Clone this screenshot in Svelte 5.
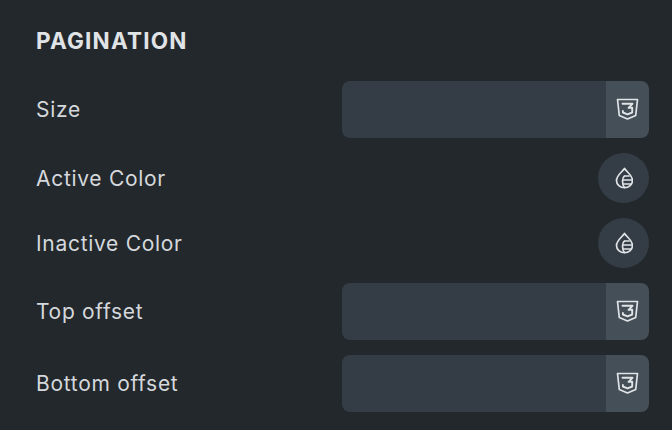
<script lang="ts">
	const rows = [
		{ label: 'Size', kind: 'unit' },
		{ label: 'Active Color', kind: 'color' },
		{ label: 'Inactive Color', kind: 'color' },
		{ label: 'Top offset', kind: 'unit' },
		{ label: 'Bottom offset', kind: 'unit' }
	];
</script>

<div class="panel">
	<h3 class="panel__title">PAGINATION</h3>
	<div class="panel__rows">
		{#each rows as row}
			<div class="row">
				<span class="row__label">{row.label}</span>
				{#if row.kind === 'unit'}
					<div class="field">
						<div class="field__input"></div>
						<div class="field__unit">
							<svg width="23" height="23" viewBox="0 0 23 23" fill="none" stroke="currentColor" stroke-width="1.700" stroke-linejoin="round" stroke-linecap="round">
								<path d="M1.500 1.500h20l-1.800 16L11.500 21l-8.200-3.500z" />
								<path d="M6.500 5.800h10l-4 4h3.700v4.700l-4.700 1.900-4.600-1.900v-1.600" stroke-width="1.900" />
							</svg>
						</div>
					</div>
				{:else}
					<button type="button" class="swatch" aria-label={row.label}>
						<svg width="18" height="22" viewBox="0 0 18 22" fill="none" stroke="currentColor" stroke-width="1.700" stroke-linecap="round" stroke-linejoin="round">
							<path d="M9.500 1.500C7 5 1.500 8.600 1.500 13.400a8 7.300 0 0 0 16 0C17.500 8.600 12 5 9.500 1.500z" />
							<path d="M9.500 9C8 10 7.500 11.500 7.500 14s.5 5 2 6.500M9.500 9h4.500M8 13h9M8.500 17h7.500" />
						</svg>
					</button>
				{/if}
			</div>
		{/each}
	</div>
</div>

<style>
	:global(body) {
		margin: 0;
		background: #23282c;
	}

	.panel {
		height: 430px;
		padding: 0 23px 0 36px;
		box-sizing: border-box;
		background: #23282c;
		font-family: Inter, sans-serif;
		overflow: hidden;
	}

	.panel__title {
		margin: 0;
		padding-top: 28px;
		height: 81px;
		box-sizing: border-box;
		font-size: 22.500px;
		line-height: 26px;
		font-weight: 700;
		letter-spacing: 1.200px;
		color: #e0e4e7;
	}

	.panel__rows {
		display: flex;
		flex-direction: column;
		gap: 14.600px;
	}

	.row {
		display: flex;
		align-items: center;
		justify-content: space-between;
	}

	.row__label {
		font-size: 21px;
		letter-spacing: 0.700px;
		color: #d5d8dc;
	}

	.field {
		display: flex;
		width: 307px;
		height: 57.300px;
		border-radius: 8px;
		overflow: hidden;
	}

	.field__input {
		flex: 1;
		background: #343d45;
	}

	.field__unit {
		display: flex;
		align-items: center;
		justify-content: center;
		width: 43px;
		background: #454f57;
		color: #e0e4e7;
	}

	.swatch {
		display: flex;
		align-items: center;
		justify-content: center;
		width: 51px;
		height: 50.400px;
		padding: 0;
		border: 0;
		border-radius: 50%;
		background: #343d45;
		color: #e0e4e7;
	}
</style>
